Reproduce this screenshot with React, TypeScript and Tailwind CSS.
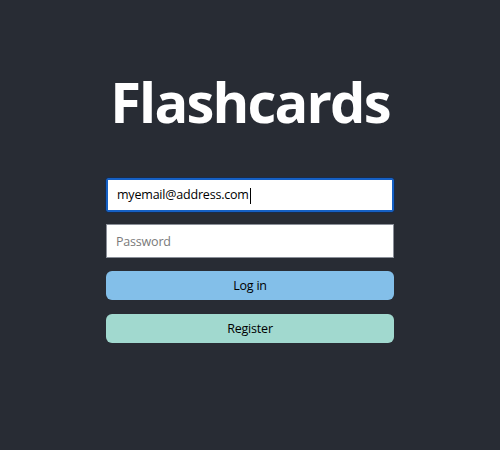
export default function App() {
  return (
    <div className="w-[500px] h-[450px] bg-[#282c34] flex flex-col items-center" style={{ fontFamily: '"Open Sans", sans-serif' }}>
      <h1 className="mt-[73px] h-[56px] text-[56px] leading-[56px] font-bold text-white tracking-[-1.8px]">Flashcards</h1>
      <div className="mt-[49px] w-[288px] flex flex-col">
        <div className="h-[34px] bg-white border-2 border-[#1560c4] rounded-[2px] outline outline-1 outline-[#1b2c48] flex items-center px-[9px] pt-px text-[12.5px] tracking-[-0.2px] text-black">
          <span>myemail@address.com</span>
          <span className="w-px h-[16px] bg-black ml-px"></span>
        </div>
        <div className="mt-[12px] h-[34px] bg-white border border-[#8a8f98] flex items-center px-[9px] pt-[2px] text-[12.5px] tracking-[-0.2px] text-[#7a7a7a]">
          Password
        </div>
        <div className="mt-[13px] h-[29px] rounded-[6px] bg-[#83bfe9] flex items-center justify-center pt-[2px] text-[12.5px] tracking-[-0.2px] text-black">
          Log in
        </div>
        <div className="mt-[14px] h-[29px] rounded-[6px] bg-[#a1d9cf] flex items-center justify-center pt-[2px] text-[12.5px] tracking-[-0.2px] text-black">
          Register
        </div>
      </div>
    </div>
  );
}
